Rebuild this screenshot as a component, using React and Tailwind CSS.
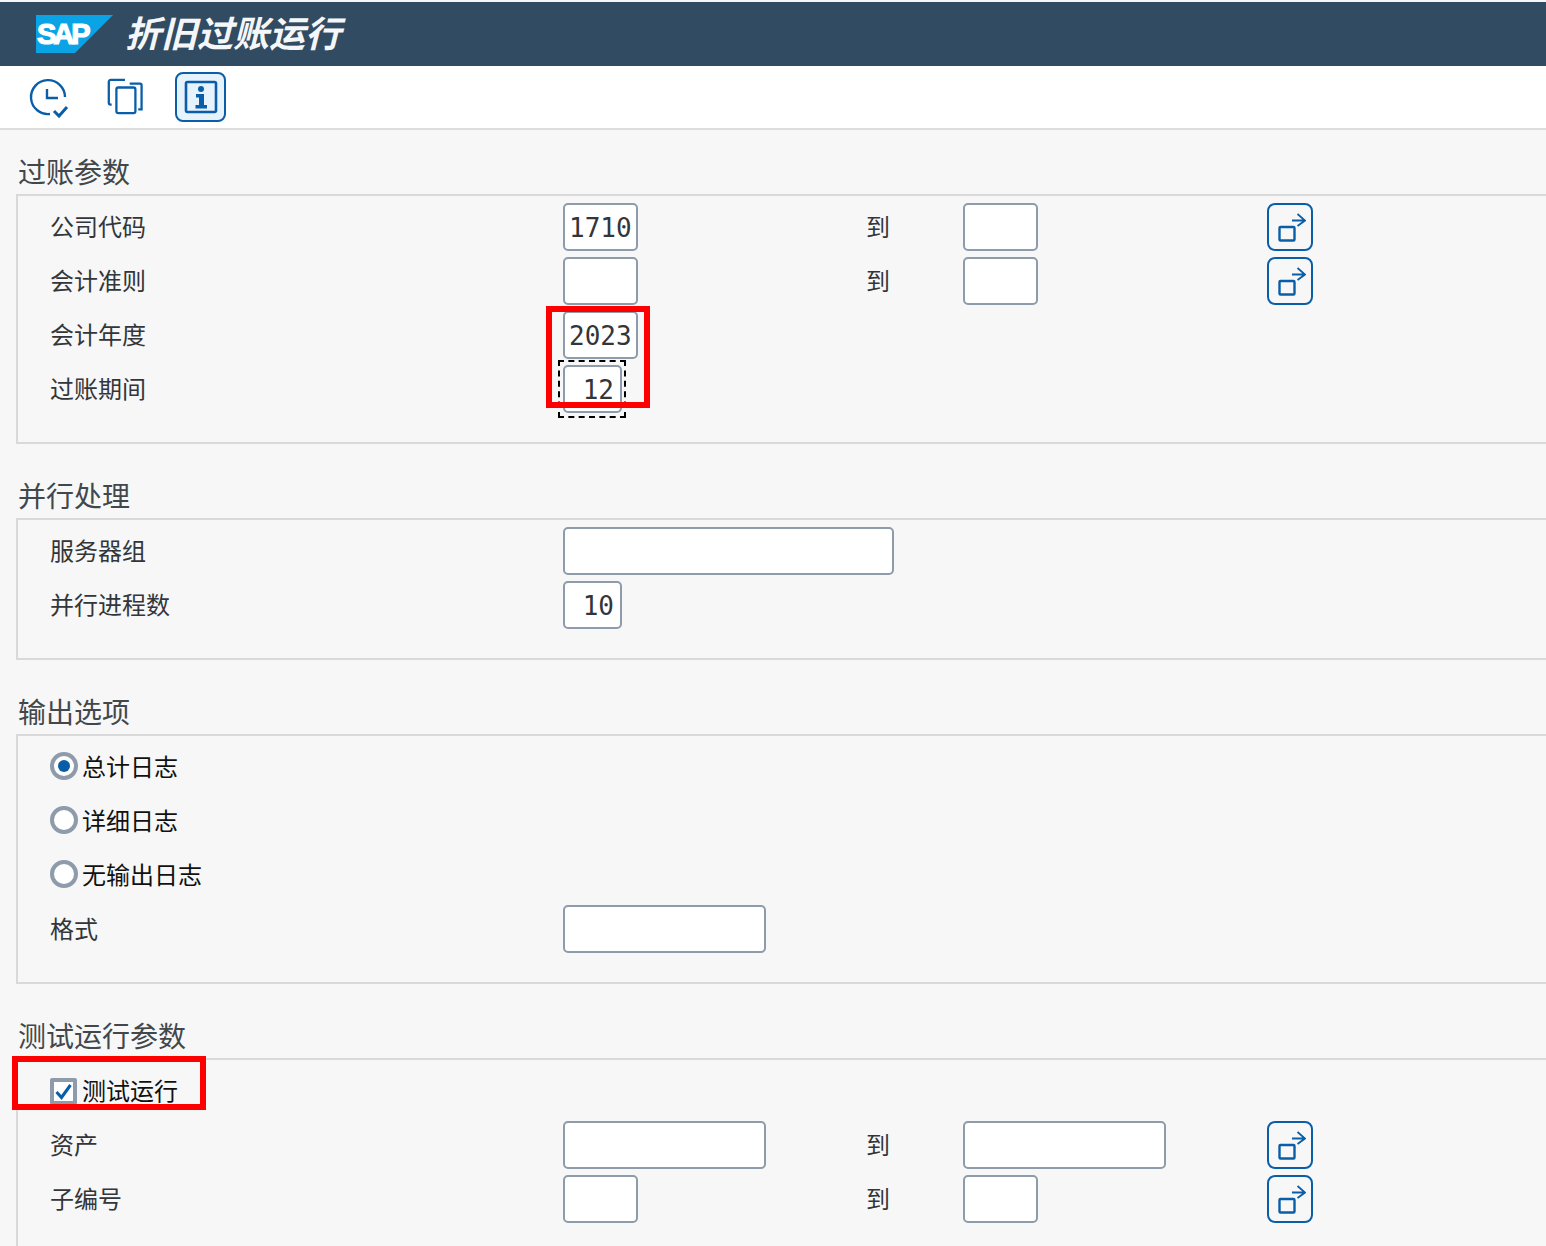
function NavIcon() {
  return (
    <button className="w-[46px] h-[48px] rounded-[8px] border-2 border-[#0a5ea8] bg-transparent flex items-center justify-center shrink-0 p-0">
      <svg width="32" height="32" viewBox="0 0 32 32" fill="none" stroke="#0a5ea8" strokeWidth="2">
        <rect x="5.5" y="16" width="15" height="13.5" rx="1" strokeWidth="2.4" />
        <path d="M18 9.5 H31 M23.5 3 L31 9.5 L23.5 15" strokeWidth="1.8" />
      </svg>
    </button>
  );
}

function Field({ w, value, right }) {
  return (
    <div
      className={`${w} h-[48px] shrink-0 rounded-[5px] border-2 border-[#8e9bab] bg-white flex items-center text-[26px] text-[#32363a] leading-none pt-[1px] ${right ? "justify-end pr-[6px]" : "pl-[4px]"}`}
      style={{ fontFamily: '"DejaVu Sans Mono", monospace' }}
    >
      {value}
    </div>
  );
}

function Label({ children }) {
  return <div className="w-[513px] shrink-0 text-[24px] leading-none text-[#32363a] pb-[3px]">{children}</div>;
}

function Row({ label, w, value, right, to, toW }) {
  return (
    <div className="h-[48px] flex items-center relative">
      <Label>{label}</Label>
      <Field w={w} value={value} right={right} />
      {to && (
        <>
          <div className="absolute left-[816px] text-[24px] leading-none text-[#32363a] pb-[3px]">到</div>
          <div className="absolute left-[913px] top-0">
            <Field w={toW} />
          </div>
          <div className="absolute left-[1217px] top-0">
            <NavIcon />
          </div>
        </>
      )}
    </div>
  );
}

function Section({ title, mt, children }) {
  return (
    <section className={mt}>
      <h2 className="pl-[18px] text-[28px] leading-[40px] h-[43px] font-normal text-[#42474c]">{title}</h2>
      <div className="ml-[16px] border-l-2 border-t-2 border-b-2 border-[#d9d9d9] pl-[32px] pt-[7px] pb-[29px] flex flex-col gap-[6px]">
        {children}
      </div>
    </section>
  );
}

function Radio({ label, on }) {
  return (
    <div className="h-[48px] flex items-center">
      <span className="w-[28px] h-[28px] rounded-full border-[4px] border-[#8e9bab] bg-white flex items-center justify-center shrink-0 mb-[2px]">
        {on && <span className="w-[12px] h-[12px] rounded-full bg-[#0a5ea8]" />}
      </span>
      <span className="ml-[4px] pb-[2px] text-[24px] leading-none text-[#111111]">{label}</span>
    </div>
  );
}

export default function App() {
  return (
    <div
      className="relative w-[1546px] h-[1246px] overflow-hidden bg-[#f7f7f7] pt-[2px]"
      style={{ fontFamily: '"Noto Sans CJK SC", "Noto Sans", sans-serif' }}
    >
      <header className="h-[64px] bg-[#304b62] flex items-center pl-[36px]">
        <svg width="78" height="40" viewBox="0 0 78 40" className="shrink-0 mt-[1px]">
          <polygon points="0,0 77,0 39,38 0,38" fill="#0aa4e6" />
          <text x="1" y="29" fontFamily="Liberation Sans" fontWeight="700" fontSize="29" letterSpacing="-3" fill="#ffffff" stroke="#ffffff" strokeWidth="1.2">SAP</text>
        </svg>
        <h1 className="ml-[14px] pb-[6px] -translate-x-[3px] text-[36px] leading-none italic font-bold text-[#f4f6f8]">折旧过账运行</h1>
      </header>

      <div className="h-[64px] bg-white border-b-2 border-[#dcdcdc] flex items-center pl-[29px]">
        <svg width="42" height="42" viewBox="0 0 42 42" fill="none" stroke="#0a5ea8" strokeWidth="2.4" className="shrink-0 mt-[3px]">
          <path d="M21 36 A17 17 0 1 1 36 19" />
          <path d="M18 11 V20 H29" />
          <path d="M25 33 L30 38 L38 29" strokeWidth="3" />
        </svg>
        <svg width="38" height="38" viewBox="0 0 40 40" fill="none" stroke="#0a5ea8" strokeWidth="2.4" className="shrink-0 ml-[34px]">
          <path d="M21 2 H6 a2 2 0 0 0 -2 2 V26 a2 2 0 0 0 2 2 H7" />
          <rect x="12" y="10" width="20" height="27" rx="2" />
          <path d="M26 6 H37 a1.5 1.5 0 0 1 1.5 1.5 V33 H35" />
        </svg>
        <div className="ml-[32px] w-[51px] h-[50px] rounded-[8px] border-2 border-[#0a5ea8] bg-[#e6f2fc] flex items-center justify-center shrink-0">
          <svg width="34" height="34" viewBox="0 0 34 34" fill="none" className="shrink-0">
            <rect x="2" y="2" width="30" height="30" rx="1.5" stroke="#0a5ea8" strokeWidth="2.6" />
            <circle cx="17" cy="9" r="3" fill="#0a5ea8" />
            <path d="M12 14 H20 V25 H23 V28.5 H11.5 V25 H15 V17.5 H12 Z" fill="#0a5ea8" />
          </svg>
        </div>
      </div>

      <Section title="过账参数" mt="mt-[21px]">
        <Row label="公司代码" w="w-[75px]" value="1710" to toW="w-[75px]" />
        <Row label="会计准则" w="w-[75px]" to toW="w-[75px]" />
        <Row label="会计年度" w="w-[75px]" value="2023" />
        <Row label="过账期间" w="w-[59px]" value="12" right />
      </Section>

      <Section title="并行处理" mt="mt-[31px]">
        <Row label="服务器组" w="w-[331px]" />
        <Row label="并行进程数" w="w-[59px]" value="10" right />
      </Section>

      <Section title="输出选项" mt="mt-[31px]">
        <Radio label="总计日志" on />
        <Radio label="详细日志" />
        <Radio label="无输出日志" />
        <Row label="格式" w="w-[203px]" />
      </Section>

      <Section title="测试运行参数" mt="mt-[31px]">
        <div className="h-[48px] flex items-center">
          <span className="w-[27px] h-[27px] rounded-[2px] border-[4px] border-[#8e9bab] bg-white flex items-center justify-center shrink-0">
            <svg width="19" height="19" viewBox="0 0 19 19" fill="none" stroke="#0a5ea8" strokeWidth="3" className="shrink-0">
              <path d="M2.5 10 L7.5 15.5 L16.5 3" />
            </svg>
          </span>
          <span className="ml-[5px] pb-[2px] text-[24px] leading-none text-[#111111]">测试运行</span>
        </div>
        <Row label="资产" w="w-[203px]" to toW="w-[203px]" />
        <Row label="子编号" w="w-[75px]" to toW="w-[75px]" />
      </Section>

      {/* dashed focus frame and red annotations lying over the form */}
      <div className="absolute left-[558px] top-[360px] w-[68px] h-[58px] border-2 border-dashed border-black" />
      <div className="absolute left-[546px] top-[306px] w-[104px] h-[102px] border-[6px] border-[#ff0000]" />
      <div className="absolute left-[12px] top-[1056px] w-[194px] h-[54px] border-[6px] border-[#ff0000]" />
    </div>
  );
}
